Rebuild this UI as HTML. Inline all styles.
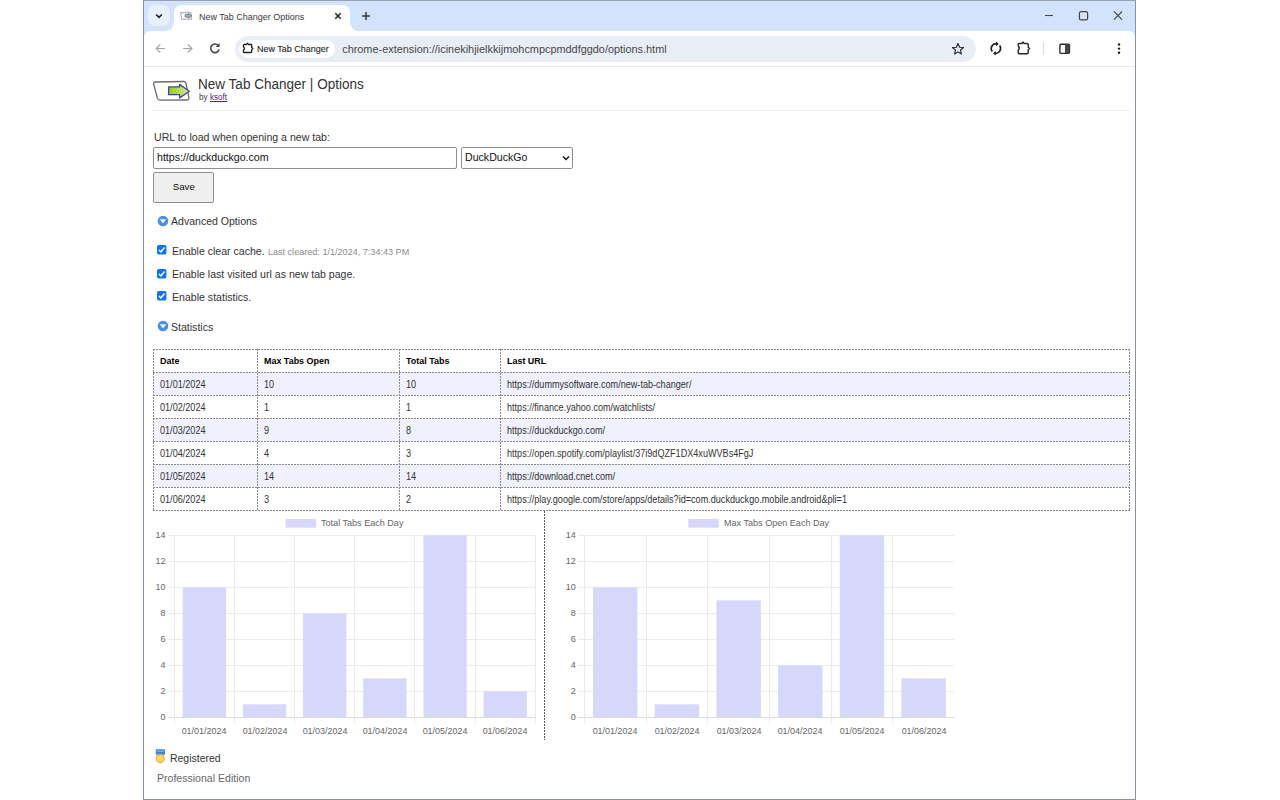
<!DOCTYPE html>
<html><head><meta charset="utf-8">
<style>
*{margin:0;padding:0;box-sizing:border-box}
html,body{width:1280px;height:800px;overflow:hidden;background:#fff;font-family:"Liberation Sans",sans-serif}
.abs{position:absolute}
.t{position:absolute;white-space:nowrap;line-height:1}
svg{display:block}
</style></head>
<body>
<div class="abs" style="left:143px;top:0;width:993px;height:800px;border:1px solid #8494a6;border-left-color:#7f92ab;border-top-color:#96a2b2;background:#fff"></div>
<div class="abs" style="left:144px;top:1px;width:991px;height:36px;background:#d3e3fd"></div>
<div class="abs" style="left:144px;top:31px;width:991px;height:35px;background:#fff;border-radius:6px 6px 0 0"></div>
<div class="abs" style="left:144px;top:66px;width:991px;height:1px;background:#e6e6e6"></div>
<div class="abs" style="left:148px;top:5px;width:22px;height:21px;border-radius:7px;background:#e9f0fd"></div>
<svg class="abs" style="left:153px;top:10px" width="12" height="12" viewBox="0 0 12 12"><path d="M3.1 4.5 L6 7.3 L8.9 4.5" fill="none" stroke="#1f1f1f" stroke-width="1.6"/></svg>
<svg class="abs" style="left:164px;top:5px" width="196" height="26" viewBox="0 0 196 26"><path d="M0 26 Q10 26 10 16 L10 8 Q10 0 18 0 L178 0 Q186 0 186 8 L186 16 Q186 26 196 26 Z" fill="#fff"/></svg>
<svg class="abs" style="left:180px;top:11px" width="14" height="10" viewBox="0 0 14 10"><path d="M0.7 1.6 L10.8 1.4 L11.6 8.2 L1.6 8.4 Z" fill="#fff" stroke="#b5b5b5" stroke-width="1.1" stroke-linejoin="round"/><path d="M5.2 3.6 H8.4 V2.4 L11.9 4.8 L8.4 7.2 V6 H5.2 Z" fill="#a5d640" stroke="#6c64cc" stroke-width="0.9" stroke-linejoin="round"/></svg>
<div class="t" style="left:198.85px;top:12.12px;font-size:9.900px;color:#3a3a3a;font-weight:normal;transform:scaleX(0.9091);transform-origin:0 0;">New Tab Changer Options</div>
<svg class="abs" style="left:333px;top:11px" width="10" height="10" viewBox="0 0 10 10"><path d="M2.3 2.3 L7.7 7.7 M7.7 2.3 L2.3 7.7" stroke="#1f1f1f" stroke-width="1.45"/></svg>
<svg class="abs" style="left:360px;top:10px" width="12" height="12" viewBox="0 0 12 12"><path d="M6 2 V10 M2 6 H10" stroke="#3a3a3a" stroke-width="1.5"/></svg>
<svg class="abs" style="left:1042px;top:10px" width="14" height="12" viewBox="0 0 14 12"><path d="M3 5.5 H11" stroke="#474747" stroke-width="1.1"/></svg>
<svg class="abs" style="left:1076px;top:9px" width="14" height="14" viewBox="0 0 14 14"><rect x="3.4" y="2.7" width="8.2" height="8.2" rx="1.6" fill="none" stroke="#474747" stroke-width="1.25"/></svg>
<svg class="abs" style="left:1111px;top:9px" width="14" height="14" viewBox="0 0 14 14"><path d="M3 2.5 L11 10.6 M11 2.5 L3 10.6" stroke="#474747" stroke-width="1.1"/></svg>
<svg class="abs" style="left:154px;top:42px" width="13" height="13" viewBox="0 0 13 13"><path d="M11 6.5 H2.2 M6.3 2.3 L2.1 6.5 L6.3 10.7" fill="none" stroke="#a4a4a4" stroke-width="1.2"/></svg>
<svg class="abs" style="left:181px;top:42px" width="13" height="13" viewBox="0 0 13 13"><path d="M2 6.5 H10.8 M6.7 2.3 L10.9 6.5 L6.7 10.7" fill="none" stroke="#a4a4a4" stroke-width="1.2"/></svg>
<svg class="abs" style="left:208px;top:41.2px" width="14" height="14" viewBox="0 0 14 14"><path d="M10.04 4.26 A4.3 4.3 0 1 0 11.15 8.41" fill="none" stroke="#474747" stroke-width="1.6"/><path d="M11.6 2.1 L11.6 6.1 L7.6 6.1 Z" fill="#474747"/></svg>
<div class="abs" style="left:235px;top:36px;width:741px;height:26px;border-radius:13px;background:#e9eef6"></div>
<div class="abs" style="left:239px;top:40px;width:96px;height:18px;border-radius:9px;background:#fff"></div>
<svg class="abs" style="left:238px;top:38px" width="20" height="20" viewBox="0 0 20 20"><path d="M6.3 6.5 L8.6 6.5 L9.5 5.2 L10.4 6.5 L13 6.5 Q13.7 6.5 13.7 7.2 L13.7 9.5 L14.9 10.5 L13.7 11.5 L13.7 13.8 Q13.7 14.5 13 14.5 L6.1 14.5 Q5.4 14.5 5.4 13.8 L5.4 12.2 Q7.6 10.5 5.4 8.8 L5.4 7.4 Q5.4 6.5 6.3 6.5 Z" fill="none" stroke="#1f1f1f" stroke-width="1.3" stroke-linejoin="round"/></svg>
<div class="t" style="left:257.40px;top:44.02px;font-size:9.900px;color:#1f1f1f;font-weight:normal;transform:scaleX(0.9091);transform-origin:0 0;-webkit-text-stroke:0.12px #1f1f1f">New Tab Changer</div>
<div class="t" style="left:342.20px;top:43.87px;font-size:10.900px;color:#474747;font-weight:normal;">chrome-extension://icinekihjielkkijmohcmpcpmddfggdo/options.html</div>
<svg class="abs" style="left:951px;top:42px" width="14" height="14" viewBox="0 0 14 14"><path d="M7 1.5 L8.6 5.2 L12.5 5.5 L9.5 8.1 L10.4 12 L7 9.9 L3.6 12 L4.5 8.1 L1.5 5.5 L5.4 5.2 Z" fill="none" stroke="#1f1f1f" stroke-width="1.1" stroke-linejoin="round"/></svg>
<svg class="abs" style="left:985px;top:38px" width="22" height="22" viewBox="0 0 22 22"><path d="M7.3 13.6 A4.9 4.9 0 0 1 11.6 5.7" fill="none" stroke="#1f1f1f" stroke-width="1.6"/><path d="M14.6 7.6 A4.9 4.9 0 0 1 10.2 15.4" fill="none" stroke="#1f1f1f" stroke-width="1.6"/><path d="M11 3.6 L13.8 5.9 L11 8.2 Z" fill="#1f1f1f"/><path d="M10.8 13 L8 15.3 L10.8 17.6 Z" fill="#1f1f1f"/></svg>
<svg class="abs" style="left:1015px;top:40px" width="17" height="16" viewBox="0 0 17 16"><path d="M4.2 3.5 H6.9 L8 2 L9.1 3.5 H12.2 Q13.2 3.5 13.2 4.5 V7.3 L14.6 8.5 L13.2 9.7 V12.8 Q13.2 13.8 12.2 13.8 H4.2 Q3.2 13.8 3.2 12.8 V10.5 Q5.4 8.2 3.2 5.8 V4.5 Q3.2 3.5 4.2 3.5 Z" fill="none" stroke="#2a2a2a" stroke-width="1.45" stroke-linejoin="round"/></svg>
<div class="abs" style="left:1043px;top:42px;width:1px;height:13px;background:#c9d9f6"></div>
<svg class="abs" style="left:1057px;top:41px" width="15" height="15" viewBox="0 0 15 15"><rect x="2.9" y="3.3" width="9.6" height="9.1" rx="1.2" fill="none" stroke="#2a2a2a" stroke-width="1.4"/><rect x="8" y="3.3" width="4.5" height="9.1" fill="#474747"/></svg>
<svg class="abs" style="left:1115px;top:41px" width="8" height="15" viewBox="0 0 8 15"><circle cx="4" cy="3.5" r="1.2" fill="#1f1f1f"/><circle cx="4" cy="7.6" r="1.2" fill="#1f1f1f"/><circle cx="4" cy="11.8" r="1.2" fill="#1f1f1f"/></svg>
<svg class="abs" style="left:150px;top:76px" width="44" height="30" viewBox="0 0 44 30"><defs><linearGradient id="lg" x1="0" x2="1" y1="0" y2="0"><stop offset="0" stop-color="#94cf1c"/><stop offset="1" stop-color="#d2ec8c"/></linearGradient></defs><path d="M5.5 6 L33.5 5.5 Q35.7 5.5 36 7.5 L38.9 21.8 Q39.2 24 37 24 L9.8 24.1 Q7.8 24.1 7.4 22 L3.6 8 Q3.3 6 5.5 6 Z" fill="#fff" stroke="#6e6e6e" stroke-width="1.3"/><path d="M18.6 10.9 H29.6 V8.4 L39.4 15.2 L29.6 21.9 V18.7 H18.6 Z" fill="url(#lg)" stroke="#4b3fb8" stroke-width="1.3" stroke-linejoin="round"/></svg>
<div class="t" style="left:198.20px;top:77.18px;font-size:14.905px;color:#333;font-weight:normal;transform:scaleX(0.9091);transform-origin:0 0;">New Tab Changer | Options</div>
<div class="t" style="left:199.40px;top:92.86px;font-size:8.910px;color:#444;font-weight:normal;transform:scaleX(0.9091);transform-origin:0 0;">by</div>
<div class="t" style="left:210.30px;top:92.86px;font-size:8.910px;color:#551a8b;font-weight:normal;transform:scaleX(0.9091);transform-origin:0 0;"><span style="text-decoration:underline">ksoft</span></div>
<div class="abs" style="left:153px;top:110px;width:977px;height:1px;background:#eeeeee"></div>
<div class="t" style="left:153.90px;top:130.75px;font-size:11.638px;color:#333;font-weight:normal;transform:scaleX(0.9091);transform-origin:0 0;">URL to load when opening a new tab:</div>
<div class="abs" style="left:153px;top:147px;width:304px;height:22px;border:1px solid #8f8f8f;border-radius:2px;background:#fff"></div>
<div class="t" style="left:157.00px;top:150.70px;font-size:11.693px;color:#111;font-weight:normal;transform:scaleX(0.9091);transform-origin:0 0;">https://duckduckgo.com</div>
<div class="abs" style="left:461px;top:147px;width:112px;height:22px;border:1px solid #8f8f8f;border-radius:2px;background:#fff"></div>
<div class="t" style="left:464.90px;top:151.23px;font-size:11.660px;color:#111;font-weight:normal;transform:scaleX(0.9091);transform-origin:0 0;">DuckDuckGo</div>
<svg class="abs" style="left:561px;top:154px" width="10" height="8" viewBox="0 0 10 8"><path d="M2 2.5 L5 5.5 L8 2.5" fill="none" stroke="#111" stroke-width="1.4"/></svg>
<div class="abs" style="left:153px;top:172px;width:61px;height:31px;border:1px solid #8f8f8f;border-radius:2px;background:#efefef"></div>
<div class="t" style="left:172.70px;top:182.35px;font-size:9.740px;color:#111;font-weight:normal;">Save</div>
<svg class="abs" style="left:156.8px;top:214.6px" width="12" height="12" viewBox="0 0 12 12"><circle cx="6" cy="6" r="5.3" fill="#4a90e2"/><path d="M3.2 4.6 H8.8 L6 8 Z" fill="#fff" stroke="#fff" stroke-width="0.4" stroke-linejoin="round"/></svg>
<div class="t" style="left:170.50px;top:215.27px;font-size:11.605px;color:#333;font-weight:normal;transform:scaleX(0.9091);transform-origin:0 0;">Advanced Options</div>
<svg class="abs" style="left:156.8px;top:245.3px" width="10" height="10" viewBox="0 0 10 10"><rect x="0" y="0" width="9.4" height="9.4" rx="1.6" fill="#1172f4"/><path d="M2 4.9 L3.9 6.9 L7.5 2.6" fill="none" stroke="#fff" stroke-width="1.5"/></svg>
<svg class="abs" style="left:156.8px;top:268.8px" width="10" height="10" viewBox="0 0 10 10"><rect x="0" y="0" width="9.4" height="9.4" rx="1.6" fill="#1172f4"/><path d="M2 4.9 L3.9 6.9 L7.5 2.6" fill="none" stroke="#fff" stroke-width="1.5"/></svg>
<svg class="abs" style="left:156.8px;top:291.3px" width="10" height="10" viewBox="0 0 10 10"><rect x="0" y="0" width="9.4" height="9.4" rx="1.6" fill="#1172f4"/><path d="M2 4.9 L3.9 6.9 L7.5 2.6" fill="none" stroke="#fff" stroke-width="1.5"/></svg>
<div class="t" style="left:171.60px;top:245.47px;font-size:11.605px;color:#333;font-weight:normal;transform:scaleX(0.9091);transform-origin:0 0;">Enable clear cache.</div>
<div class="t" style="left:267.90px;top:247.80px;font-size:9.090px;color:#8c8c8c;font-weight:normal;">Last cleared: 1/1/2024, 7:34:43 PM</div>
<div class="t" style="left:171.60px;top:268.15px;font-size:11.638px;color:#333;font-weight:normal;transform:scaleX(0.9091);transform-origin:0 0;">Enable last visited url as new tab page.</div>
<div class="t" style="left:171.60px;top:290.85px;font-size:11.638px;color:#333;font-weight:normal;transform:scaleX(0.9091);transform-origin:0 0;">Enable statistics.</div>
<svg class="abs" style="left:156.75px;top:320.1px" width="12" height="12" viewBox="0 0 12 12"><circle cx="6" cy="6" r="5.3" fill="#4a90e2"/><path d="M3.2 4.6 H8.8 L6 8 Z" fill="#fff" stroke="#fff" stroke-width="0.4" stroke-linejoin="round"/></svg>
<div class="t" style="left:170.50px;top:320.76px;font-size:11.616px;color:#333;font-weight:normal;transform:scaleX(0.9091);transform-origin:0 0;">Statistics</div>
<div class="abs" style="left:153px;top:372px;width:976px;height:23px;background:#f0f0fe"></div>
<div class="abs" style="left:153px;top:418px;width:976px;height:23px;background:#f0f0fe"></div>
<div class="abs" style="left:153px;top:464px;width:976px;height:23px;background:#f0f0fe"></div>
<div class="abs" style="left:153px;top:349px;width:977px;height:1px;background:repeating-linear-gradient(90deg,#8a8a8a 0 2px,transparent 2px 3px)"></div>
<div class="abs" style="left:153px;top:372px;width:977px;height:1px;background:repeating-linear-gradient(90deg,#8a8a8a 0 2px,transparent 2px 3px)"></div>
<div class="abs" style="left:153px;top:395px;width:977px;height:1px;background:repeating-linear-gradient(90deg,#8a8a8a 0 2px,transparent 2px 3px)"></div>
<div class="abs" style="left:153px;top:418px;width:977px;height:1px;background:repeating-linear-gradient(90deg,#8a8a8a 0 2px,transparent 2px 3px)"></div>
<div class="abs" style="left:153px;top:441px;width:977px;height:1px;background:repeating-linear-gradient(90deg,#8a8a8a 0 2px,transparent 2px 3px)"></div>
<div class="abs" style="left:153px;top:464px;width:977px;height:1px;background:repeating-linear-gradient(90deg,#8a8a8a 0 2px,transparent 2px 3px)"></div>
<div class="abs" style="left:153px;top:487px;width:977px;height:1px;background:repeating-linear-gradient(90deg,#8a8a8a 0 2px,transparent 2px 3px)"></div>
<div class="abs" style="left:153px;top:510px;width:977px;height:1px;background:repeating-linear-gradient(90deg,#8a8a8a 0 2px,transparent 2px 3px)"></div>
<div class="abs" style="left:153px;top:349px;width:1px;height:162px;background:repeating-linear-gradient(180deg,#8a8a8a 0 2px,transparent 2px 3px)"></div>
<div class="abs" style="left:257px;top:349px;width:1px;height:162px;background:repeating-linear-gradient(180deg,#8a8a8a 0 2px,transparent 2px 3px)"></div>
<div class="abs" style="left:399px;top:349px;width:1px;height:162px;background:repeating-linear-gradient(180deg,#8a8a8a 0 2px,transparent 2px 3px)"></div>
<div class="abs" style="left:500px;top:349px;width:1px;height:162px;background:repeating-linear-gradient(180deg,#8a8a8a 0 2px,transparent 2px 3px)"></div>
<div class="abs" style="left:1129px;top:349px;width:1px;height:162px;background:repeating-linear-gradient(180deg,#8a8a8a 0 2px,transparent 2px 3px)"></div>
<div class="t" style="left:160.20px;top:356.26px;font-size:9.845px;color:#000;font-weight:bold;transform:scaleX(0.9091);transform-origin:0 0;">Date</div>
<div class="t" style="left:264.20px;top:356.26px;font-size:9.845px;color:#000;font-weight:bold;transform:scaleX(0.9091);transform-origin:0 0;">Max Tabs Open</div>
<div class="t" style="left:406.20px;top:356.26px;font-size:9.845px;color:#000;font-weight:bold;transform:scaleX(0.9091);transform-origin:0 0;">Total Tabs</div>
<div class="t" style="left:507.20px;top:356.26px;font-size:9.845px;color:#000;font-weight:bold;transform:scaleX(0.9091);transform-origin:0 0;">Last URL</div>
<div class="t" style="left:160.00px;top:379.62px;font-size:10.010px;color:#333;font-weight:normal;transform:scaleX(0.9091);transform-origin:0 0;">01/01/2024</div>
<div class="t" style="left:264.00px;top:379.62px;font-size:10.010px;color:#333;font-weight:normal;transform:scaleX(0.9091);transform-origin:0 0;">10</div>
<div class="t" style="left:406.00px;top:379.62px;font-size:10.010px;color:#333;font-weight:normal;transform:scaleX(0.9091);transform-origin:0 0;">10</div>
<div class="t" style="left:507.00px;top:379.62px;font-size:10.010px;color:#333;font-weight:normal;transform:scaleX(0.9091);transform-origin:0 0;">https://dummysoftware.com/new-tab-changer/</div>
<div class="t" style="left:160.00px;top:402.62px;font-size:10.010px;color:#333;font-weight:normal;transform:scaleX(0.9091);transform-origin:0 0;">01/02/2024</div>
<div class="t" style="left:264.00px;top:402.62px;font-size:10.010px;color:#333;font-weight:normal;transform:scaleX(0.9091);transform-origin:0 0;">1</div>
<div class="t" style="left:406.00px;top:402.62px;font-size:10.010px;color:#333;font-weight:normal;transform:scaleX(0.9091);transform-origin:0 0;">1</div>
<div class="t" style="left:507.00px;top:402.62px;font-size:10.010px;color:#333;font-weight:normal;transform:scaleX(0.9091);transform-origin:0 0;">https://finance.yahoo.com/watchlists/</div>
<div class="t" style="left:160.00px;top:425.62px;font-size:10.010px;color:#333;font-weight:normal;transform:scaleX(0.9091);transform-origin:0 0;">01/03/2024</div>
<div class="t" style="left:264.00px;top:425.62px;font-size:10.010px;color:#333;font-weight:normal;transform:scaleX(0.9091);transform-origin:0 0;">9</div>
<div class="t" style="left:406.00px;top:425.62px;font-size:10.010px;color:#333;font-weight:normal;transform:scaleX(0.9091);transform-origin:0 0;">8</div>
<div class="t" style="left:507.00px;top:425.62px;font-size:10.010px;color:#333;font-weight:normal;transform:scaleX(0.9091);transform-origin:0 0;">https://duckduckgo.com/</div>
<div class="t" style="left:160.00px;top:448.62px;font-size:10.010px;color:#333;font-weight:normal;transform:scaleX(0.9091);transform-origin:0 0;">01/04/2024</div>
<div class="t" style="left:264.00px;top:448.62px;font-size:10.010px;color:#333;font-weight:normal;transform:scaleX(0.9091);transform-origin:0 0;">4</div>
<div class="t" style="left:406.00px;top:448.62px;font-size:10.010px;color:#333;font-weight:normal;transform:scaleX(0.9091);transform-origin:0 0;">3</div>
<div class="t" style="left:507.00px;top:448.62px;font-size:10.010px;color:#333;font-weight:normal;transform:scaleX(0.9091);transform-origin:0 0;">https://open.spotify.com/playlist/37i9dQZF1DX4xuWVBs4FgJ</div>
<div class="t" style="left:160.00px;top:471.62px;font-size:10.010px;color:#333;font-weight:normal;transform:scaleX(0.9091);transform-origin:0 0;">01/05/2024</div>
<div class="t" style="left:264.00px;top:471.62px;font-size:10.010px;color:#333;font-weight:normal;transform:scaleX(0.9091);transform-origin:0 0;">14</div>
<div class="t" style="left:406.00px;top:471.62px;font-size:10.010px;color:#333;font-weight:normal;transform:scaleX(0.9091);transform-origin:0 0;">14</div>
<div class="t" style="left:507.00px;top:471.62px;font-size:10.010px;color:#333;font-weight:normal;transform:scaleX(0.9091);transform-origin:0 0;">https://download.cnet.com/</div>
<div class="t" style="left:160.00px;top:494.62px;font-size:10.010px;color:#333;font-weight:normal;transform:scaleX(0.9091);transform-origin:0 0;">01/06/2024</div>
<div class="t" style="left:264.00px;top:494.62px;font-size:10.010px;color:#333;font-weight:normal;transform:scaleX(0.9091);transform-origin:0 0;">3</div>
<div class="t" style="left:406.00px;top:494.62px;font-size:10.010px;color:#333;font-weight:normal;transform:scaleX(0.9091);transform-origin:0 0;">2</div>
<div class="t" style="left:507.00px;top:494.62px;font-size:10.010px;color:#333;font-weight:normal;transform:scaleX(0.9091);transform-origin:0 0;">https://play.google.com/store/apps/details?id=com.duckduckgo.mobile.android&amp;pli=1</div>
<div class="abs" style="left:544px;top:511px;width:1px;height:229px;background:repeating-linear-gradient(180deg,#5a5a5a 0 2px,transparent 2px 3px)"></div>
<svg class="abs" style="left:0;top:0" width="1280" height="800" viewBox="0 0 1280 800"><path d="M167.8 717.5 H535.3199999999999" stroke="#dcdcdc" stroke-width="1"/><path d="M167.8 691.5 H535.3199999999999" stroke="#ebebeb" stroke-width="1"/><path d="M167.8 665.5 H535.3199999999999" stroke="#ebebeb" stroke-width="1"/><path d="M167.8 639.5 H535.3199999999999" stroke="#ebebeb" stroke-width="1"/><path d="M167.8 613.5 H535.3199999999999" stroke="#ebebeb" stroke-width="1"/><path d="M167.8 587.5 H535.3199999999999" stroke="#ebebeb" stroke-width="1"/><path d="M167.8 561.5 H535.3199999999999" stroke="#ebebeb" stroke-width="1"/><path d="M167.8 535.5 H535.3199999999999" stroke="#ebebeb" stroke-width="1"/><path d="M174.5 535.3 V723.3" stroke="#ebebeb" stroke-width="1"/><path d="M234.5 535.3 V723.3" stroke="#ebebeb" stroke-width="1"/><path d="M294.5 535.3 V723.3" stroke="#ebebeb" stroke-width="1"/><path d="M354.5 535.3 V723.3" stroke="#ebebeb" stroke-width="1"/><path d="M414.5 535.3 V723.3" stroke="#ebebeb" stroke-width="1"/><path d="M475.5 535.3 V723.3" stroke="#ebebeb" stroke-width="1"/><path d="M535.5 535.3 V723.3" stroke="#ebebeb" stroke-width="1"/><rect x="182.72" y="587.30" width="43.32" height="130.00" fill="#d7d7fc"/><rect x="242.89" y="704.30" width="43.32" height="13.00" fill="#d7d7fc"/><rect x="303.06" y="613.30" width="43.32" height="104.00" fill="#d7d7fc"/><rect x="363.23" y="678.30" width="43.32" height="39.00" fill="#d7d7fc"/><rect x="423.40" y="535.30" width="43.32" height="182.00" fill="#d7d7fc"/><rect x="483.57" y="691.30" width="43.32" height="26.00" fill="#d7d7fc"/><rect x="285.7" y="519" width="30.4" height="8.7" fill="#d7d7fc"/></svg>
<div class="t" style="left:-34.40px;width:200px;text-align:right;top:712.80px;font-size:9px;line-height:9px;color:#666">0</div>
<div class="t" style="left:-34.40px;width:200px;text-align:right;top:686.80px;font-size:9px;line-height:9px;color:#666">2</div>
<div class="t" style="left:-34.40px;width:200px;text-align:right;top:660.80px;font-size:9px;line-height:9px;color:#666">4</div>
<div class="t" style="left:-34.40px;width:200px;text-align:right;top:634.80px;font-size:9px;line-height:9px;color:#666">6</div>
<div class="t" style="left:-34.40px;width:200px;text-align:right;top:608.80px;font-size:9px;line-height:9px;color:#666">8</div>
<div class="t" style="left:-34.40px;width:200px;text-align:right;top:582.80px;font-size:9px;line-height:9px;color:#666">10</div>
<div class="t" style="left:-34.40px;width:200px;text-align:right;top:556.80px;font-size:9px;line-height:9px;color:#666">12</div>
<div class="t" style="left:-34.40px;width:200px;text-align:right;top:530.80px;font-size:9px;line-height:9px;color:#666">14</div>
<div class="t" style="left:149.39px;width:110.00px;text-align:center;top:726.27px;font-size:9.834px;color:#666;transform:scaleX(0.9091);transform-origin:55.00px 0">01/01/2024</div>
<div class="t" style="left:209.56px;width:110.00px;text-align:center;top:726.27px;font-size:9.834px;color:#666;transform:scaleX(0.9091);transform-origin:55.00px 0">01/02/2024</div>
<div class="t" style="left:269.73px;width:110.00px;text-align:center;top:726.27px;font-size:9.834px;color:#666;transform:scaleX(0.9091);transform-origin:55.00px 0">01/03/2024</div>
<div class="t" style="left:329.89px;width:110.00px;text-align:center;top:726.27px;font-size:9.834px;color:#666;transform:scaleX(0.9091);transform-origin:55.00px 0">01/04/2024</div>
<div class="t" style="left:390.06px;width:110.00px;text-align:center;top:726.27px;font-size:9.834px;color:#666;transform:scaleX(0.9091);transform-origin:55.00px 0">01/05/2024</div>
<div class="t" style="left:450.24px;width:110.00px;text-align:center;top:726.27px;font-size:9.834px;color:#666;transform:scaleX(0.9091);transform-origin:55.00px 0">01/06/2024</div>
<div class="t" style="left:321.00px;top:517.54px;font-size:9.988px;color:#666;font-weight:normal;transform:scaleX(0.9091);transform-origin:0 0;">Total Tabs Each Day</div>
<svg class="abs" style="left:0;top:0" width="1280" height="800" viewBox="0 0 1280 800"><path d="M577.9 717.5 H954.48" stroke="#dcdcdc" stroke-width="1"/><path d="M577.9 691.5 H954.48" stroke="#ebebeb" stroke-width="1"/><path d="M577.9 665.5 H954.48" stroke="#ebebeb" stroke-width="1"/><path d="M577.9 639.5 H954.48" stroke="#ebebeb" stroke-width="1"/><path d="M577.9 613.5 H954.48" stroke="#ebebeb" stroke-width="1"/><path d="M577.9 587.5 H954.48" stroke="#ebebeb" stroke-width="1"/><path d="M577.9 561.5 H954.48" stroke="#ebebeb" stroke-width="1"/><path d="M577.9 535.5 H954.48" stroke="#ebebeb" stroke-width="1"/><path d="M584.5 535.3 V723.3" stroke="#ebebeb" stroke-width="1"/><path d="M646.5 535.3 V723.3" stroke="#ebebeb" stroke-width="1"/><path d="M707.5 535.3 V723.3" stroke="#ebebeb" stroke-width="1"/><path d="M769.5 535.3 V723.3" stroke="#ebebeb" stroke-width="1"/><path d="M831.5 535.3 V723.3" stroke="#ebebeb" stroke-width="1"/><path d="M892.5 535.3 V723.3" stroke="#ebebeb" stroke-width="1"/><rect x="593.04" y="587.30" width="44.41" height="130.00" fill="#d7d7fc"/><rect x="654.72" y="704.30" width="44.41" height="13.00" fill="#d7d7fc"/><rect x="716.40" y="600.30" width="44.41" height="117.00" fill="#d7d7fc"/><rect x="778.08" y="665.30" width="44.41" height="52.00" fill="#d7d7fc"/><rect x="839.76" y="535.30" width="44.41" height="182.00" fill="#d7d7fc"/><rect x="901.44" y="678.30" width="44.41" height="39.00" fill="#d7d7fc"/><rect x="688.3" y="519" width="30.4" height="8.7" fill="#d7d7fc"/></svg>
<div class="t" style="left:375.70px;width:200px;text-align:right;top:712.80px;font-size:9px;line-height:9px;color:#666">0</div>
<div class="t" style="left:375.70px;width:200px;text-align:right;top:686.80px;font-size:9px;line-height:9px;color:#666">2</div>
<div class="t" style="left:375.70px;width:200px;text-align:right;top:660.80px;font-size:9px;line-height:9px;color:#666">4</div>
<div class="t" style="left:375.70px;width:200px;text-align:right;top:634.80px;font-size:9px;line-height:9px;color:#666">6</div>
<div class="t" style="left:375.70px;width:200px;text-align:right;top:608.80px;font-size:9px;line-height:9px;color:#666">8</div>
<div class="t" style="left:375.70px;width:200px;text-align:right;top:582.80px;font-size:9px;line-height:9px;color:#666">10</div>
<div class="t" style="left:375.70px;width:200px;text-align:right;top:556.80px;font-size:9px;line-height:9px;color:#666">12</div>
<div class="t" style="left:375.70px;width:200px;text-align:right;top:530.80px;font-size:9px;line-height:9px;color:#666">14</div>
<div class="t" style="left:560.24px;width:110.00px;text-align:center;top:726.27px;font-size:9.834px;color:#666;transform:scaleX(0.9091);transform-origin:55.00px 0">01/01/2024</div>
<div class="t" style="left:621.92px;width:110.00px;text-align:center;top:726.27px;font-size:9.834px;color:#666;transform:scaleX(0.9091);transform-origin:55.00px 0">01/02/2024</div>
<div class="t" style="left:683.60px;width:110.00px;text-align:center;top:726.27px;font-size:9.834px;color:#666;transform:scaleX(0.9091);transform-origin:55.00px 0">01/03/2024</div>
<div class="t" style="left:745.28px;width:110.00px;text-align:center;top:726.27px;font-size:9.834px;color:#666;transform:scaleX(0.9091);transform-origin:55.00px 0">01/04/2024</div>
<div class="t" style="left:806.96px;width:110.00px;text-align:center;top:726.27px;font-size:9.834px;color:#666;transform:scaleX(0.9091);transform-origin:55.00px 0">01/05/2024</div>
<div class="t" style="left:868.64px;width:110.00px;text-align:center;top:726.27px;font-size:9.834px;color:#666;transform:scaleX(0.9091);transform-origin:55.00px 0">01/06/2024</div>
<div class="t" style="left:723.70px;top:517.54px;font-size:9.988px;color:#666;font-weight:normal;transform:scaleX(0.9091);transform-origin:0 0;">Max Tabs Open Each Day</div>
<svg class="abs" style="left:155px;top:749px" width="11" height="15" viewBox="0 0 11 15"><rect x="0.8" y="0.2" width="9.2" height="5.6" rx="0.8" fill="#3f86d6"/><rect x="1.6" y="1.4" width="7.6" height="1.4" fill="#7fb4ec"/><circle cx="5.25" cy="9.6" r="4.6" fill="#f2b33d"/><circle cx="5.25" cy="9.6" r="3.2" fill="#fbd96a"/></svg>
<div class="t" style="left:170.00px;top:752.66px;font-size:11.506px;color:#333;font-weight:normal;transform:scaleX(0.9091);transform-origin:0 0;">Registered</div>
<div class="t" style="left:156.90px;top:771.86px;font-size:11.616px;color:#666;font-weight:normal;transform:scaleX(0.9091);transform-origin:0 0;">Professional Edition</div>
</body></html>
